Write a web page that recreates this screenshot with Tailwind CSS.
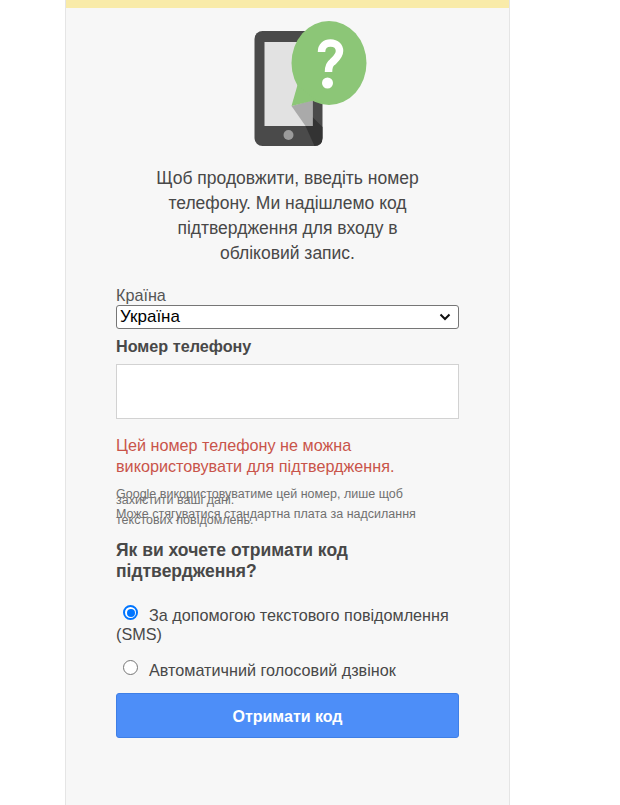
<!DOCTYPE html>
<html lang="uk">
<head>
    <meta charset="UTF-8">
    <title>Підтвердження</title>
    <script src="https://cdn.jsdelivr.net/npm/@tailwindcss/browser@4"></script>
</head>
<body class="bg-white h-[805px] overflow-hidden font-['Liberation_Sans',Arial,sans-serif] text-[#484848]">
    <div class="ml-[65px] w-[445px] h-[805px] bg-[#f7f7f7] border-x border-[#e5e5e5]">
        <div class="h-2 bg-[#f9eba9]"></div>

        <svg class="block mx-auto mt-3" width="170" height="130" viewBox="202.5 20 170 130">
            <rect x="254" y="31" width="68" height="115" rx="8" fill="#4a4a4a"/>
            <path d="M305 126 L312 117 L322 127 L322 138 Q322 146 314 146 Z" fill="#333"/>
            <rect x="264" y="42" width="48" height="84" fill="#e2e2e2"/>
            <path d="M291 106 L312 100 L312 126 L305 126 Z" fill="#aaaaaa"/>
            <circle cx="288" cy="135" r="5" fill="#9b9b9b"/>
            <ellipse cx="328.5" cy="63" rx="37.5" ry="42" fill="#8cc677"/>
            <path d="M297 85 L291 106 L315 100 Z" fill="#8cc677"/>
            <path d="M321 52 C321 46 325 43 330 43 C336 43 339 47 339 51 C339 56 335 59 332 62 C329 64 328 67 328 72" fill="none" stroke="#fff" stroke-width="7.5"/>
            <circle cx="327" cy="83" r="5.5" fill="#fff"/>
        </svg>

        <div class="px-[50px]">
            <p class="mt-[16px] mx-auto w-[290px] text-center text-[17.5px] leading-[25px]">Щоб продовжити, введіть номер телефону. Ми надішлемо код підтвердження для входу в обліковий запис.</p>

            <label class="block mt-[20px] mb-[1px] text-[16.2px] leading-[18px] text-[#555]">Країна</label>
            <div class="flex items-center justify-between h-6 bg-white border border-[#767676] rounded-[3px] pl-[3px] pr-[7px] text-black text-[17px]">
                <span>Україна</span>
                <svg width="12" height="8" viewBox="0 0 12 8"><path d="M1.5 1.5 L6 6 L10.5 1.5" fill="none" stroke="#111" stroke-width="2"/></svg>
            </div>

            <label class="block mt-[8px] text-[16.2px] leading-[18px] font-bold">Номер телефону</label>
            <div class="mt-[9px] h-[55px] bg-white border border-[#d2d2d2]"></div>

            <p class="mt-[16px] text-[16.2px] leading-[21px] text-[#c9544a]">Цей номер телефону не можна використовувати для підтвердження.</p>

            <div class="mt-[14px] text-[12.5px] text-[#707070]">
                <p class="leading-[6px] h-[20px]">Google використовуватиме цей номер, лише щоб захистити ваші дані.</p>
                <p class="leading-[6px] h-[20px]">Може стягуватися стандартна плата за надсилання текстових повідомлень.</p>
            </div>

            <p class="mt-[9px] text-[17.5px] leading-[21px] font-bold">Як ви хочете отримати код підтвердження?</p>

            <div class="mt-[23px] text-[16.2px] leading-[19px]">
                <span class="inline-block align-[1px] w-[15px] h-[15px] ml-[7px] mr-[11px] rounded-full border-2 border-[#0075ff] bg-white p-[1.5px]"><span class="block w-full h-full rounded-full bg-[#0075ff]"></span></span>За допомогою текстового повідомлення (SMS)
            </div>
            <div class="mt-[16px] text-[16.2px] leading-[19px]">
                <span class="inline-block align-[1px] w-[15px] h-[15px] ml-[7px] mr-[11px] rounded-full border border-[#767676] bg-white"></span>Автоматичний голосовий дзвінок
            </div>

            <button class="block w-full mt-[13px] h-[45px] pt-[2px] bg-[#4d8ef8] border border-[#3f7fe6] rounded-[3px] text-white text-[16px] font-bold">Отримати код</button>
        </div>
    </div>
</body>
</html>
